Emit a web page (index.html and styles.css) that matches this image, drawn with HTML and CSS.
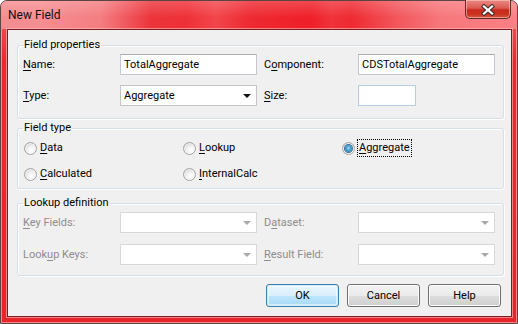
FILE: index.html
```html
<!DOCTYPE html>
<html>
<head>
<meta charset="utf-8">
<title>New Field</title>
<link rel="stylesheet" href="styles.css">
</head>
<body>
<div class="window">
  <div class="titlebar">
    <span class="title">New Field</span>
    <div class="close">
      <svg width="16" height="12" viewBox="0 0 16 12">
        <path d="M4 2.5 L12 9.5 M12 2.5 L4 9.5" stroke="#3a2a2a" stroke-width="4.2" stroke-linecap="square"/>
        <path d="M4 2.5 L12 9.5 M12 2.5 L4 9.5" stroke="#ffffff" stroke-width="2.3" stroke-linecap="square"/>
      </svg>
    </div>
  </div>
  <div class="client">
    <fieldset class="group g1">
      <legend>Field properties</legend>
      <div class="grid">
        <label class="lbl"><u>N</u>ame:</label>
        <div class="edit w-full">TotalAggregate</div>
        <label class="lbl">C<u>o</u>mponent:</label>
        <div class="edit w-full">CDSTotalAggregate</div>
        <label class="lbl"><u>T</u>ype:</label>
        <div class="combo w-full"><span>Aggregate</span><i class="arrow"></i></div>
        <label class="lbl"><u>S</u>ize:</label>
        <div class="edit size"></div>
      </div>
    </fieldset>

    <fieldset class="group g2">
      <legend>Field type</legend>
      <div class="radios">
        <div class="radio"><i class="dot"></i><span><u>D</u>ata</span></div>
        <div class="radio"><i class="dot"></i><span><u>L</u>ookup</span></div>
        <div class="radio"><i class="dot on"></i><span class="focus"><u>A</u>ggregate</span></div>
        <div class="radio"><i class="dot"></i><span><u>C</u>alculated</span></div>
        <div class="radio"><i class="dot"></i><span><u>I</u>nternalCalc</span></div>
      </div>
    </fieldset>

    <fieldset class="group g3">
      <legend>Lookup definition</legend>
      <div class="grid lookup">
        <label class="lbl dis"><u>K</u>ey Fields:</label>
        <div class="combo dis w-full"><span></span><i class="arrow"></i></div>
        <label class="lbl dis">D<u>a</u>taset:</label>
        <div class="combo dis w-full"><span></span><i class="arrow"></i></div>
        <label class="lbl dis">Look<u>u</u>p Keys:</label>
        <div class="combo dis w-full"><span></span><i class="arrow"></i></div>
        <label class="lbl dis"><u>R</u>esult Field:</label>
        <div class="combo dis w-full"><span></span><i class="arrow"></i></div>
      </div>
    </fieldset>

    <div class="buttons">
      <button class="btn default">OK</button>
      <button class="btn">Cancel</button>
      <button class="btn">Help</button>
    </div>
  </div>
</div>
</body>
</html>
```
FILE: styles.css
```css
* { box-sizing: border-box; }
html, body { margin: 0; padding: 0; }
body {
  width: 518px;
  height: 324px;
  overflow: hidden;
  font-family: Roboto, "Noto Sans", sans-serif;
  font-size: 11px;
  color: #000;
  background: #ffffff;
}
u { text-decoration: underline; text-underline-offset: 2px; }

.window {
  width: 518px;
  height: 324px;
  display: flex;
  flex-direction: column;
  border: 1px solid #5b4444;
  border-radius: 7px 7px 0 0;
  background: linear-gradient(to bottom, #f06268 0, #ea2a31 60px, #e9252c 100%);
  box-shadow: inset 0 0 0 1px rgba(255, 200, 200, 0.6);
}

.titlebar {
  height: 28px;
  display: flex;
  align-items: flex-start;
  padding-left: 7px;
  border-radius: 6px 6px 0 0;
  background:
    linear-gradient(to bottom, rgba(255,255,255,0.18), rgba(255,255,255,0) 60%),
    linear-gradient(to right,
      #f48d90 0, #f58e91 40px, #f47d81 100px, #ec343b 150px, #ee3037 185px,
      #f2454b 215px, #ee2931 250px, #ef1f28 310px, #f0323a 330px, #ee2a31 350px,
      #f25a5f 400px, #f6777b 440px, #fb8084 518px);
}
.title {
  margin-top: 6px;
  font-size: 12px;
  line-height: 16px;
  color: #111;
}
.close {
  margin-left: auto;
  margin-right: 6px;
  width: 46px;
  height: 19px;
  margin-top: -1px;
  display: flex;
  align-items: center;
  justify-content: center;
  border: 1px solid #5e2a2a;
  border-top: none;
  border-radius: 0 0 5px 5px;
  background: linear-gradient(to bottom, #e98a85 0, #dc5a50 45%, #c72a1e 55%, #c9341f 80%, #d65a40 100%);
  box-shadow: inset 0 0 0 1px rgba(255, 210, 200, 0.55);
}
.close svg { display: block; margin-top: 1px; }

.client {
  flex: 1;
  margin: 0 5px 6px 6px;
  border: 1px solid #7b1d20;
  background: #f0f0f0;
  box-shadow: 0 0 0 1px rgba(255, 190, 190, 0.6);
  padding: 8px 7px 0 9px;
  display: flex;
  flex-direction: column;
}

.group {
  margin: 0;
  border: 1px solid #d5dfe5;
  border-radius: 3px;
  box-shadow: inset 1px 1px 0 #fff, 1px 1px 0 #fff;
  padding: 2px 7px 12px 5px;
  min-width: 0;
}
.group legend {
  padding: 0 1px;
  margin-left: 0;
  line-height: 14px;
  font-size: 11px;
}
.g2 { margin-top: 2px; padding: 5px 7px 6px 6px; }
.g2 legend { margin-left: -1px; }
.g3 { margin-top: 7px; padding: 2px 7px 10px 5px; }

.grid {
  display: grid;
  grid-template-columns: 97px 144px 94px 137px;
  grid-auto-rows: 21px;
  row-gap: 10px;
  align-items: center;
}
.lookup { row-gap: 11px; }
.lbl { line-height: 21px; white-space: nowrap; }
.lbl.dis { color: #8d8d8d; }

.edit, .combo {
  height: 21px;
  background: #fff;
  border: 1px solid #c5c9cf;
  border-top-color: #abadb3;
  line-height: 19px;
  padding-left: 3px;
  white-space: nowrap;
}
.w-full { width: 137px; }
.size { width: 58px; border-color: #b5cde6; }

.combo {
  display: flex;
  align-items: center;
  border-color: #c4c4c4;
}
.combo span { flex: 1; }
.arrow {
  width: 0;
  height: 0;
  margin-right: 5px;
  border-left: 4px solid transparent;
  border-right: 4px solid transparent;
  border-top: 4px solid #111;
}
.combo.dis { border-color: #d8d8d8; }
.combo.dis .arrow { border-top-color: #a8a8a8; }

.radios {
  display: grid;
  grid-template-columns: 159px 159px 150px;
  grid-auto-rows: 16px;
  row-gap: 10px;
}
.radio {
  display: flex;
  align-items: center;
  gap: 3px;
  line-height: 16px;
  white-space: nowrap;
}
.radios .radio:nth-child(4) { grid-column: 1; }
.dot {
  width: 13px;
  height: 13px;
  border-radius: 50%;
  border: 1px solid #a3a3a3;
  background: radial-gradient(circle at 60% 65%, #ffffff 0, #f3f3f3 35%, #d8d8d8 75%, #c9c9c9 100%);
  box-shadow: inset 0 0 0 1px rgba(255,255,255,0.6);
  display: flex;
  align-items: center;
  justify-content: center;
}
.dot.on::after {
  content: "";
  width: 7px;
  height: 7px;
  border-radius: 50%;
  background: radial-gradient(circle at 50% 45%, #a8e2fb 0, #4aa3d6 40%, #1e5f93 100%);
  box-shadow: 0 0 0 1px #3b6f98;
}
.focus {
  outline: 1px dotted #000;
  padding: 0 1px;
  margin-left: 0;
}

.buttons {
  display: flex;
  justify-content: flex-end;
  gap: 8px;
  margin-top: 8px;
  padding-right: 3px;
}
.btn {
  width: 73px;
  height: 23px;
  font-family: inherit;
  font-size: 11px;
  color: #000;
  border: 1px solid #707070;
  border-radius: 3px;
  background: linear-gradient(to bottom, #f2f2f2 0, #ebebeb 50%, #dddddd 51%, #cfcfcf 100%);
  box-shadow: inset 0 0 0 1px #fcfcfc;
  padding: 0;
}
.btn.default {
  border-color: #3c7fb1;
  background: linear-gradient(to bottom, #eaf6fd 0, #d9f0fc 50%, #bee6fd 51%, #a7d9f5 100%);
  box-shadow: inset 0 0 0 1px #d4ecf8, inset 0 0 0 2px rgba(255,255,255,0.5);
}
```
